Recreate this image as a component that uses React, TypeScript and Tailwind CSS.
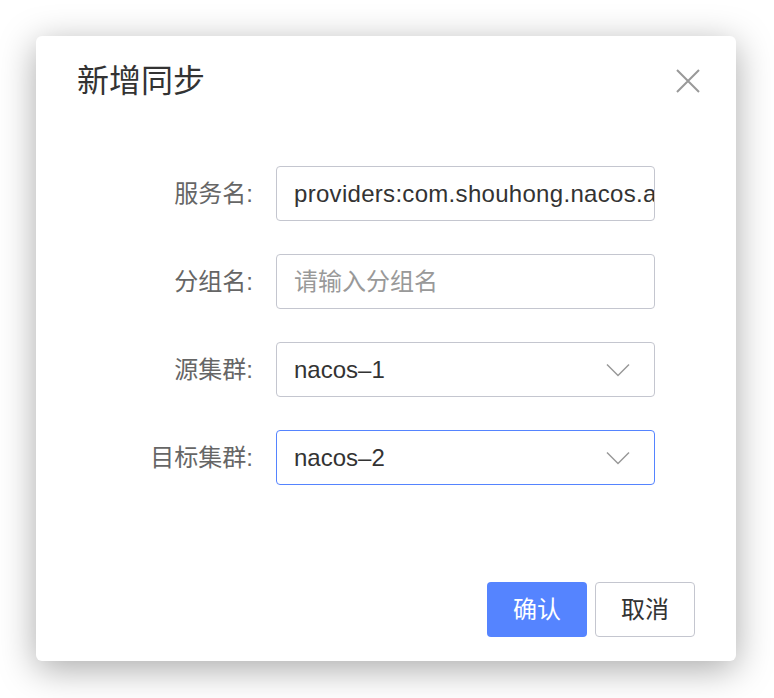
import React from 'react';

const font = { fontFamily: '"Liberation Sans", "Noto Sans CJK SC", sans-serif' };

function Chevron() {
  return (
    <svg width="24" height="14" viewBox="0 0 24 14" className="shrink-0">
      <path d="M1 1.5 L12 12.5 L23 1.5" fill="none" stroke="#999" strokeWidth="1.5" />
    </svg>
  );
}

interface RowProps {
  label: string;
  children: React.ReactNode;
}

function Row({ label, children }: RowProps) {
  return (
    <div className="flex items-center h-[55px]">
      <div className="w-[217px] text-right text-[24px] text-[#666] leading-none">{label}:</div>
      <div className="ml-[23px] w-[379px] h-full">{children}</div>
    </div>
  );
}

export default function App() {
  return (
    <div className="min-h-[698px] bg-white pt-[36px] pl-[36px]" style={font}>
      <div className="w-[700px] h-[625px] bg-white rounded-[6px] shadow-[0_8px_36px_rgba(0,0,0,0.34)] flex flex-col">
        {/* Header */}
        <div className="flex items-start justify-between pl-[41px] pr-[36px] pt-[23px]">
          <h2 className="text-[32px] leading-[44px] text-[#333] font-normal">新增同步</h2>
          <button className="mt-[10px] w-[24px] h-[24px]">
            <svg width="24" height="24" viewBox="0 0 24 24">
              <path d="M1 1 L23 23 M23 1 L1 23" stroke="#999" strokeWidth="2" />
            </svg>
          </button>
        </div>

        {/* Form */}
        <div className="flex flex-col gap-[33px] mt-[63px]">
          <Row label="服务名">
            <div className="h-full border border-[#c4c6cf] rounded-[4px] flex items-center pl-[17px] overflow-hidden">
              <span className="text-[24px] text-[#333] whitespace-nowrap tracking-[0.3px]">providers:com.shouhong.nacos.api</span>
            </div>
          </Row>
          <Row label="分组名">
            <div className="h-full border border-[#c4c6cf] rounded-[4px] flex items-center pl-[17px]">
              <span className="text-[24px] text-[#999]">请输入分组名</span>
            </div>
          </Row>
          <Row label="源集群">
            <div className="h-full border border-[#c4c6cf] rounded-[4px] flex items-center justify-between pl-[17px] pr-[24px]">
              <span className="text-[24px] text-[#333]">nacos–1</span>
              <Chevron />
            </div>
          </Row>
          <Row label="目标集群">
            <div className="h-full border border-[#5584ff] rounded-[4px] flex items-center justify-between pl-[17px] pr-[24px]">
              <span className="text-[24px] text-[#333]">nacos–2</span>
              <Chevron />
            </div>
          </Row>
        </div>

        {/* Footer */}
        <div className="mt-auto flex justify-end gap-[8px] pr-[41px] pb-[24px]">
          <button className="w-[100px] h-[55px] rounded-[4px] bg-[#5584ff] text-white text-[24px]">确认</button>
          <button className="w-[100px] h-[55px] rounded-[4px] bg-white border border-[#c4c6cf] text-[#333] text-[24px]">取消</button>
        </div>
      </div>
    </div>
  );
}
